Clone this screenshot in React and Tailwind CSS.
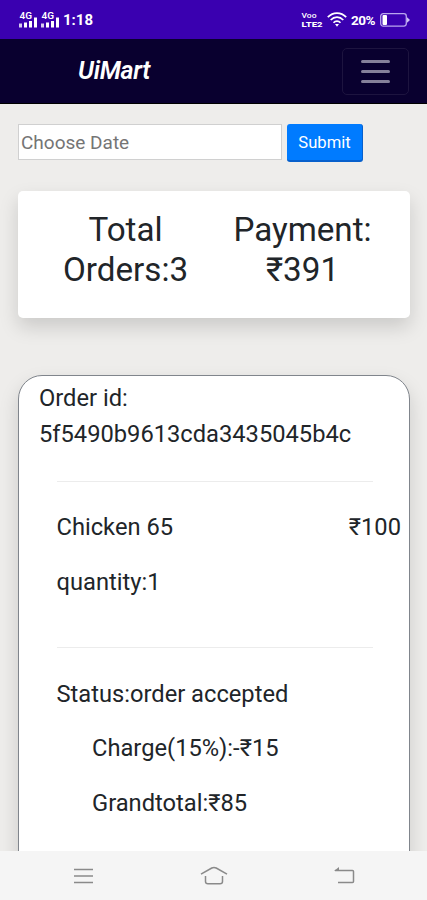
const ORDER = {
  id: "5f5490b9613cda3435045b4c",
  item: "Chicken 65",
  price: "₹100",
  quantity: 1,
  status: "order accepted",
  charge: "-₹15",
  total: "₹85",
};

function SignalIcon() {
  return (
    <svg width="18" height="17" viewBox="0 0 18 17" fill="#fff" aria-hidden="true">
      <text x="0.5" y="8" fontSize="8.5" fontWeight="600" fontFamily="Roboto, sans-serif" textLength="12.5" lengthAdjust="spacingAndGlyphs">4G</text>
      <rect x="0" y="12.5" width="3" height="4" opacity="0.8" />
      <rect x="5" y="11.5" width="3" height="5" />
      <rect x="10" y="10" width="3" height="6.5" />
      <rect x="15" y="6.5" width="3" height="10" />
    </svg>
  );
}

function WifiIcon() {
  return (
    <svg width="20" height="16" viewBox="0 0 20 16" fill="none" stroke="#fff" strokeWidth="1.7" aria-hidden="true">
      <path d="M.8 5.2C6-.3 14-.3 19.2 5.2" />
      <path d="M3.7 8C7.3 4.2 12.7 4.2 16.3 8" />
      <path d="M6.5 10.7C8.5 8.5 11.5 8.5 13.5 10.7" />
      <path d="M8 12h4l-2 2.8z" fill="#fff" stroke="none" />
    </svg>
  );
}

function BatteryIcon() {
  return (
    <svg width="30" height="14" viewBox="0 0 30 14" fill="none" aria-hidden="true">
      <rect x="0.7" y="0.7" width="25.6" height="12.4" rx="2.5" stroke="#b9a6ee" strokeWidth="1.3" />
      <rect x="2.5" y="2" width="4.5" height="10" rx="1" fill="#fff" />
      <path d="M27 4.3l3 2.7l-3 2.7z" fill="#cfc0f5" />
    </svg>
  );
}

function StatusBar() {
  return (
    <div className="flex h-[39px] shrink-0 items-center justify-between bg-[#3a00b0] pl-[19px] pr-[17px] text-white">
      <div className="flex items-center gap-1">
        <SignalIcon />
        <SignalIcon />
        <span className="mt-px text-[15px] leading-4 font-bold">1:18</span>
      </div>
      <div className="flex items-center">
        <svg width="23" height="20" viewBox="0 0 23 20" fill="#fff" fontFamily="Roboto, sans-serif" aria-hidden="true">
          <text x="0.5" y="8" fontSize="7.5" fontWeight="500" textLength="15" lengthAdjust="spacingAndGlyphs">Voo</text>
          <text x="0.5" y="17.3" fontSize="7.8" fontWeight="800" textLength="21" lengthAdjust="spacingAndGlyphs">LTE2</text>
        </svg>
        <span className="ml-[3px]"><WifiIcon /></span>
        <span className="mt-px ml-1 w-[26px] text-[13.5px] leading-4 font-bold tracking-[-0.5px]">20%</span>
        <span className="ml-[3px]"><BatteryIcon /></span>
      </div>
    </div>
  );
}

function Navbar() {
  return (
    <header className="flex h-[65px] shrink-0 items-center justify-between border-b border-black bg-[#09002f] pl-[78px] pr-[18px]">
      <span className="text-[25px] leading-7 font-semibold tracking-[-0.3px] text-white italic">UiMart</span>
      <button aria-label="Menu" className="flex h-[47px] w-[67px] flex-col items-center justify-center gap-[7px] rounded-[5px] border border-[#1d143f]">
        <span className="h-[3px] w-[29px] rounded-full bg-[#85809a]" />
        <span className="h-[3px] w-[29px] rounded-full bg-[#85809a]" />
        <span className="h-[3px] w-[29px] rounded-full bg-[#85809a]" />
      </button>
    </header>
  );
}

function Summary() {
  return (
    <section className="mt-[29px] grid h-[127px] grid-cols-2 rounded-[5px] bg-white px-[19px] pt-[19px] text-center text-[33.2px] leading-[39.8px] shadow-[0_9px_19px_rgba(0,0,0,0.15)]">
      <h2>Total<br />Orders:3</h2>
      <h2>Payment:<br />₹391</h2>
    </section>
  );
}

function OrderCard() {
  return (
    <section className="mt-[57px] h-[560px] rounded-[24px] border border-[#80858c] bg-white pt-[5px] pl-5 text-[23.7px] leading-[35.6px] shadow-[0_9px_19px_rgba(0,0,0,0.15)]">
      <p>Order id:<br />{ORDER.id}</p>
      <div className="pl-[17.5px]">
        <hr className="mt-[29px] w-[316px] border-[#ececec]" />
        <div className="mt-7 flex justify-between pr-2">
          <p>{ORDER.item}</p>
          <p>{ORDER.price}</p>
        </div>
        <p className="mt-[19px]">quantity:{ORDER.quantity}</p>
        <hr className="mt-[47px] w-[316px] border-[#ececec]" />
        <p className="mt-[28.5px]">Status:{ORDER.status}</p>
        <div className="pl-[35.5px]">
          <p className="mt-[19px]">Charge(15%):{ORDER.charge}</p>
          <p className="mt-[19px]">Grandtotal:{ORDER.total}</p>
        </div>
      </div>
    </section>
  );
}

function SystemNav() {
  return (
    <nav className="flex h-[49px] shrink-0 items-center justify-between bg-[#f5f5f5] pr-[72px] pl-[73px] text-[#8a8a8a]">
      <svg width="21" height="16" viewBox="0 0 21 16" fill="none" stroke="currentColor" strokeWidth="1.5">
        <path d="M1 1.5h19M1 8h19M1 14.5h19" />
      </svg>
      <svg width="28" height="19" viewBox="0 0 28 19" fill="none" stroke="currentColor" strokeWidth="1.5" strokeLinejoin="round">
        <path d="M1 8.2L11.8 2Q14 .8 16.2 2L27 8.2" />
        <path d="M5.5 10v5.5Q5.5 17.8 8 17.8h12Q22.5 17.8 22.5 15.5V10" />
      </svg>
      <svg width="21" height="17" viewBox="0 0 21 17" fill="none" stroke="currentColor" strokeWidth="1.5">
        <path d="M1 3.5h17.5Q19.5 3.5 19.5 4.5v10Q19.5 15.5 18.5 15.5H4" />
        <path d="M0 4l5-4v4z" fill="currentColor" stroke="none" />
      </svg>
    </nav>
  );
}

export default function App() {
  return (
    <div className="flex h-screen w-full flex-col overflow-hidden bg-[#eeedeb] font-['Roboto',sans-serif] text-[#212529]">
      <StatusBar />
      <Navbar />
      <main className="min-h-0 flex-1 overflow-hidden pt-5 pr-[17px] pl-[18px]">
        <form className="flex items-start gap-[5px]">
          <input
            type="text"
            placeholder="Choose Date"
            className="h-9 w-[264px] border border-[#d0d0d0] bg-white px-0.5 text-[19px] placeholder:text-[#757575]"
          />
          <button type="button" className="h-[38px] w-[76px] rounded-[3px] border-r border-b-2 border-[#0760cc] bg-[#007bff] pt-0.5 text-[16.6px] text-white">
            Submit
          </button>
        </form>
        <Summary />
        <OrderCard />
      </main>
      <SystemNav />
    </div>
  );
}
